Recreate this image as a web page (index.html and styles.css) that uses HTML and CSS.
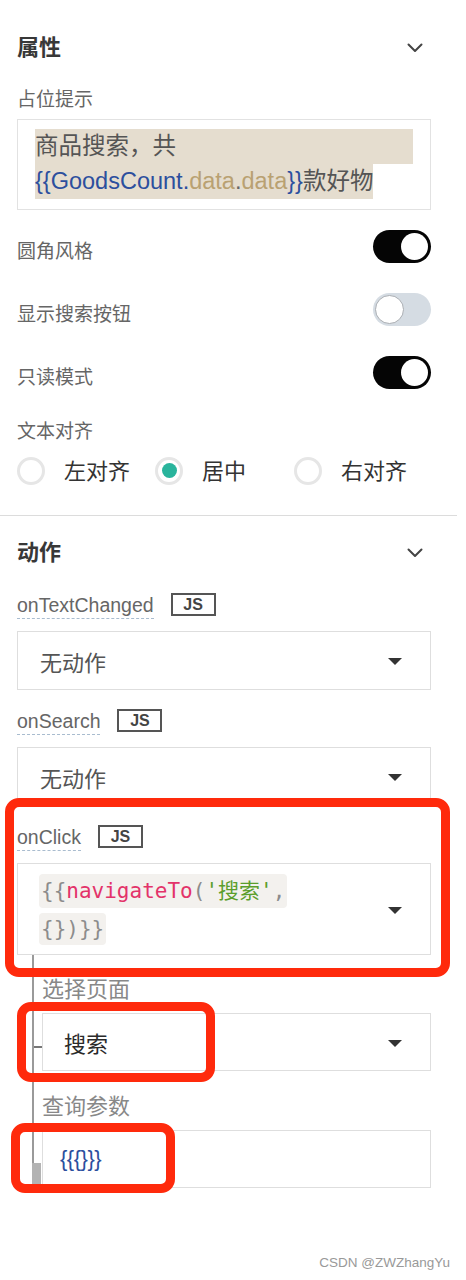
FILE: index.html
```html
<!DOCTYPE html>
<html lang="zh-CN">
<head>
<meta charset="utf-8">
<title>属性面板</title>
<link rel="stylesheet" href="styles.css">
</head>
<body>
<div class="panel">
  <section class="group">
    <div class="group-head">
      <h2>属性</h2>
      <svg class="chev" viewBox="0 0 16 10" width="16" height="10"><path d="M1.5 1.5 L8 8 L14.5 1.5" fill="none" stroke="#444" stroke-width="2" stroke-linecap="round" stroke-linejoin="round"/></svg>
    </div>
    <div class="field-label">占位提示</div>
    <div class="textarea">
      <div class="hl-line">商品搜索，共</div>
      <span class="hl-inline"><span class="b">{{GoodsCount.</span><span class="t">data</span><span class="d">.</span><span class="t">data</span><span class="b">}}</span>款好物</span>
    </div>
    <div class="switch-row first">
      <span class="switch-label">圆角风格</span>
      <span class="toggle on"><span class="knob"></span></span>
    </div>
    <div class="switch-row">
      <span class="switch-label">显示搜索按钮</span>
      <span class="toggle off"><span class="knob"></span></span>
    </div>
    <div class="switch-row">
      <span class="switch-label">只读模式</span>
      <span class="toggle on"><span class="knob"></span></span>
    </div>
    <div class="field-label align-label">文本对齐</div>
    <div class="radios">
      <label class="radio"><span class="circle"></span><span class="radio-text">左对齐</span></label>
      <label class="radio"><span class="circle checked"></span><span class="radio-text">居中</span></label>
      <label class="radio"><span class="circle"></span><span class="radio-text">右对齐</span></label>
    </div>
  </section>
  <hr class="divider">
  <section class="group">
    <div class="group-head">
      <h2>动作</h2>
      <svg class="chev" viewBox="0 0 16 10" width="16" height="10"><path d="M1.5 1.5 L8 8 L14.5 1.5" fill="none" stroke="#444" stroke-width="2" stroke-linecap="round" stroke-linejoin="round"/></svg>
    </div>
    <div class="event-row first"><span class="ev">onTextChanged</span><span class="js">JS</span></div>
    <div class="select"><span class="sel-text">无动作</span><span class="caret"></span></div>
    <div class="event-row"><span class="ev">onSearch</span><span class="js">JS</span></div>
    <div class="select"><span class="sel-text">无动作</span><span class="caret"></span></div>
    <div class="event-row"><span class="ev">onClick</span><span class="js">JS</span></div>
    <div class="select code-select">
      <div class="code">
        <span class="code-line"><span class="p">{{</span><span class="fn">navigateTo</span><span class="p">(</span><span class="s">'搜索'</span><span class="p">,</span></span>
        <span class="code-line second"><span class="p">{})}}</span></span>
      </div>
      <span class="caret"></span>
    </div>
    <div class="subgroup">
      <span class="tick"></span>
      <div class="sub-label first">选择页面</div>
      <div class="select sub-select"><span class="sel-text strong">搜索</span><span class="caret"></span></div>
      <div class="sub-label">查询参数</div>
      <div class="input"><span class="braces">{{{}}}</span></div>
    </div>
  </section>
  <div class="mark mark-click"></div>
  <div class="mark mark-page"></div>
  <div class="mark mark-query"></div>
</div>
<footer class="watermark">CSDN @ZWZhangYu</footer>
</body>
</html>
```
FILE: styles.css
```css
* { box-sizing: border-box; }

body {
  margin: 0;
  background: #fff;
  font-family: "Liberation Sans", "Noto Sans CJK SC", sans-serif;
  color: #333;
}

.panel {
  position: relative;
  padding: 26px 35px 0 17px;
}

.group-head {
  display: flex;
  justify-content: space-between;
  align-items: center;
  height: 44px;
}

.group-head h2 {
  margin: 0;
  font-size: 22px;
  font-weight: 700;
  line-height: 44px;
  color: #383838;
}

.chev {
  margin-right: 8px;
  display: block;
}

.field-label {
  margin-top: 16px;
  height: 28px;
  line-height: 28px;
  font-size: 19px;
  color: #666;
}

.textarea {
  margin-top: 5px;
  border: 1px solid #e2e2e2;
  padding: 9px 17px 10px;
  font-size: 23.5px;
  line-height: 35px;
  color: #555;
}

.hl-line {
  background: #e5ddcf;
  height: 35px;
}

.hl-inline {
  display: inline-block;
  background: #e5ddcf;
  height: 35px;
}

.b { color: #2c4f9e; }
.t { color: #b9a172; }
.d { color: #666; }

.switch-row {
  display: flex;
  justify-content: space-between;
  align-items: center;
  height: 33px;
  margin-top: 30px;
}

.switch-row.first { margin-top: 20px; }

.switch-label {
  font-size: 19px;
  color: #666;
  padding-top: 6px;
}

.toggle {
  position: relative;
  width: 58px;
  height: 33px;
  border-radius: 17px;
  display: block;
}

.toggle.on { background: #050505; }
.toggle.off { background: #d5dce3; }

.toggle .knob {
  position: absolute;
  top: 3px;
  width: 27px;
  height: 27px;
  border-radius: 50%;
  background: #fff;
}

.toggle.on .knob { right: 3px; }
.toggle.off .knob {
  left: 2px;
  top: 2px;
  width: 29px;
  height: 29px;
  border: 1.5px solid #a9adb2;
}

.align-label { margin-top: 29px; }

.radios {
  margin-top: 10px;
  display: grid;
  grid-template-columns: 138px 139px 1fr;
  height: 28px;
}

.radio {
  display: flex;
  align-items: center;
  gap: 19px;
}

.circle {
  width: 28px;
  height: 28px;
  border-radius: 50%;
  border: 3px solid #e6e6e6;
  background: #fff;
  display: flex;
  align-items: center;
  justify-content: center;
  flex: none;
}

.circle.checked::after {
  content: "";
  width: 15px;
  height: 15px;
  border-radius: 50%;
  background: #29b49c;
}

.radio-text {
  font-size: 22px;
  color: #333;
  margin-top: -3px;
}

.divider {
  border: 0;
  border-top: 1px solid #dcdcdc;
  margin: 31px -26px 0 -17px;
  height: 0;
}

.divider + .group { margin-top: 15px; }

.event-row {
  display: flex;
  align-items: flex-start;
  height: 28px;
  margin-top: 18px;
}

.event-row.first { margin-top: 17px; }

.ev {
  display: inline-block;
  font-size: 19.5px;
  line-height: 26px;
  color: #666;
  border-bottom: 1px dashed #a9bccf;
}

.js {
  margin-left: 17px;
  margin-top: 1px;
  width: 45px;
  height: 23px;
  border: 2px solid #555;
  display: flex;
  align-items: center;
  justify-content: center;
  font-size: 16px;
  font-weight: 700;
  color: #444;
}

.select {
  margin-top: 11px;
  height: 59px;
  border: 1px solid #dedede;
  display: flex;
  align-items: center;
  justify-content: space-between;
  padding: 0 28px 0 22px;
}

.sel-text {
  font-size: 22px;
  color: #555;
}

.sel-text.strong {
  color: #2a2a2a;
}

.caret {
  width: 0;
  height: 0;
  border-left: 7px solid transparent;
  border-right: 7px solid transparent;
  border-top: 7px solid #333;
  margin-top: 2px;
}

.code-select {
  height: 92px;
  padding-left: 21px;
  align-items: center;
}

.code {
  font-family: "DejaVu Sans Mono", "Noto Sans CJK SC", monospace;
  font-size: 21px;
}

.code-line {
  display: table;
  background: #f3f1ee;
  border-radius: 4px;
  padding: 0 2px;
  height: 34px;
  line-height: 34px;
}

.code-line.second {
  margin-top: 5px;
  height: 32px;
  line-height: 32px;
}

.p { color: #8c8c8c; }
.fn { color: #e3336a; }
.s { color: #5b9e2c; }

.subgroup {
  position: relative;
  margin-left: 15px;
  border-left: 2px solid #9a9a9a;
  padding-left: 8px;
  padding-top: 21px;
}

.subgroup::after {
  content: "";
  position: absolute;
  left: -2px;
  bottom: 0;
  width: 9px;
  height: 25px;
  background: #b3b3b3;
}

.tick {
  position: absolute;
  left: 0;
  top: 91px;
  width: 8px;
  height: 2px;
  background: #777;
}

.sub-label {
  margin-top: 22px;
  height: 28px;
  line-height: 28px;
  font-size: 22px;
  color: #888;
}

.sub-label.first { margin-top: 0; }

.sub-select {
  margin-top: 9px;
  height: 58px;
  padding-left: 21px;
}

.input {
  margin-top: 9px;
  height: 58px;
  border: 1px solid #dedede;
  display: flex;
  align-items: center;
  padding-left: 17px;
}

.braces {
  font-size: 22px;
  color: #2c4f9e;
  letter-spacing: -0.5px;
}

.mark {
  position: absolute;
  border: 9px solid #ff2a0c;
  border-radius: 14px;
}

.mark-click { left: 5px; top: 798px; width: 445px; height: 179px; }
.mark-page { left: 17px; top: 1002px; width: 198px; height: 80px; }
.mark-query { left: 11px; top: 1123px; width: 164px; height: 70px; }

.watermark {
  margin-top: 65px;
  padding-right: 16px;
  text-align: right;
  font-size: 13.5px;
  line-height: 20px;
  color: #999;
}
```
